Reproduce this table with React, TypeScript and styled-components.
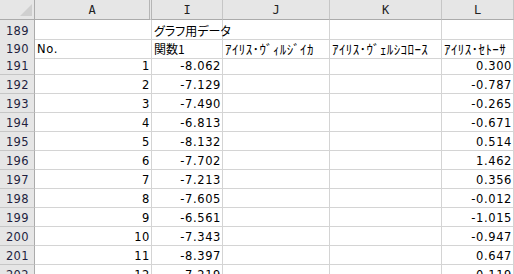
import React from "react";
import styled, { createGlobalStyle } from "styled-components";

const Global = createGlobalStyle`
  html, body { margin: 0; padding: 0; background: #ffffff; overflow: hidden; }
  body { width: 514px; height: 274px; }
`;

const COLS = "35px 117px 71px 107px 112px 72px";

const Sheet = styled.div`
  display: flex;
  flex-direction: column;
  width: 514px;
  height: 274px;
  overflow: hidden;
  background: #ffffff;
`;

const Row = styled.div<{ $h: number }>`
  display: grid;
  grid-template-columns: ${COLS};
  height: ${(p) => p.$h}px;
  flex: 0 0 auto;
`;

const Corner = styled.div`
  background: #e6e6e6;
  border-right: 1px solid #ababab;
  border-bottom: 1px solid #ababab;
  display: flex;
  align-items: flex-end;
  justify-content: flex-end;
  padding: 0 2px 3px 0;
  box-sizing: border-box;
`;

const ColHead = styled.div<{ $double?: boolean }>`
  background: #e6e6e6;
  border-bottom: 1px solid #ababab;
  border-right: ${(p) => (p.$double ? "3px double #b5b5b5" : "1px solid #c6c6c6")};
  box-sizing: border-box;
  display: flex;
  align-items: center;
  justify-content: center;
  font-family: "DejaVu Sans Mono", monospace;
  font-size: 12px;
  color: #222222;
  padding-top: 1px;
`;

const RowHead = styled.div`
  background: #e6e6e6;
  border-right: 1px solid #ababab;
  border-bottom: 1px solid #c6c6c6;
  box-sizing: border-box;
  display: flex;
  align-items: center;
  padding: 2px 0 0 6px;
  font-family: "DejaVu Sans", sans-serif;
  font-size: 11.5px;
  letter-spacing: 0.3px;
  color: #1f1f3f;
`;

const Cell = styled.div<{ $align?: "left" | "right"; $jp?: "full" | "half" }>`
  border-right: 1px solid #d4d4d4;
  border-bottom: 1px solid #d4d4d4;
  box-sizing: border-box;
  display: flex;
  align-items: center;
  justify-content: ${(p) => (p.$align === "right" ? "flex-end" : "flex-start")};
  padding: ${(p) => (p.$align === "right" ? "2px 1px 0 0" : "2px 0 0 2px")};
  white-space: nowrap;
  overflow: visible;
  color: #000000;
  font-family: ${(p) =>
    p.$jp ? '"Noto Sans CJK JP", sans-serif' : '"DejaVu Sans", sans-serif'};
  font-size: ${(p) => (p.$jp === "half" ? "13px" : p.$jp === "full" ? "12px" : "11.5px")};
  letter-spacing: ${(p) => (p.$jp === "half" ? "0.4px" : p.$jp === "full" ? "0" : "0.6px")};
  font-feature-settings: ${(p) => (p.$jp === "full" ? '"palt"' : "normal")};
`;

const Triangle = () => (
  <svg width="12" height="12" viewBox="0 0 12 12">
    <polygon points="12,0 12,12 0,12" fill="#cfcfcf" />
  </svg>
);

const data: [number, string, string][] = [
  [1, "-8.062", "0.300"],
  [2, "-7.129", "-0.787"],
  [3, "-7.490", "-0.265"],
  [4, "-6.813", "-0.671"],
  [5, "-8.132", "0.514"],
  [6, "-7.702", "1.462"],
  [7, "-7.213", "0.356"],
  [8, "-7.605", "-0.012"],
  [9, "-6.561", "-1.015"],
  [10, "-7.343", "-0.947"],
  [11, "-8.397", "0.647"],
  [12, "-7.219", "0.119"],
];

export default function App() {
  return (
    <>
      <Global />
      <Sheet>
        <Row $h={20}>
          <Corner>
            <Triangle />
          </Corner>
          <ColHead $double>A</ColHead>
          <ColHead>I</ColHead>
          <ColHead>J</ColHead>
          <ColHead>K</ColHead>
          <ColHead>L</ColHead>
        </Row>
        <Row $h={17}>
          <RowHead>189</RowHead>
          <Cell />
          <Cell $jp="full">グラフ用データ</Cell>
          <Cell />
          <Cell />
          <Cell />
        </Row>
        <Row $h={19}>
          <RowHead>190</RowHead>
          <Cell>No.</Cell>
          <Cell $jp="full">関数1</Cell>
          <Cell $jp="half">ｱｲﾘｽ･ｳﾞｨﾙｼﾞｲｶ</Cell>
          <Cell $jp="half">ｱｲﾘｽ･ｳﾞｪﾙｼｺﾛｰｽ</Cell>
          <Cell $jp="half">ｱｲﾘｽ･ｾﾄｰｻ</Cell>
        </Row>
        {data.map(([n, f, l], i) => (
          <Row $h={19} key={n}>
            <RowHead>{191 + i}</RowHead>
            <Cell $align="right">{n}</Cell>
            <Cell $align="right">{f}</Cell>
            <Cell />
            <Cell />
            <Cell $align="right">{l}</Cell>
          </Row>
        ))}
      </Sheet>
    </>
  );
}
